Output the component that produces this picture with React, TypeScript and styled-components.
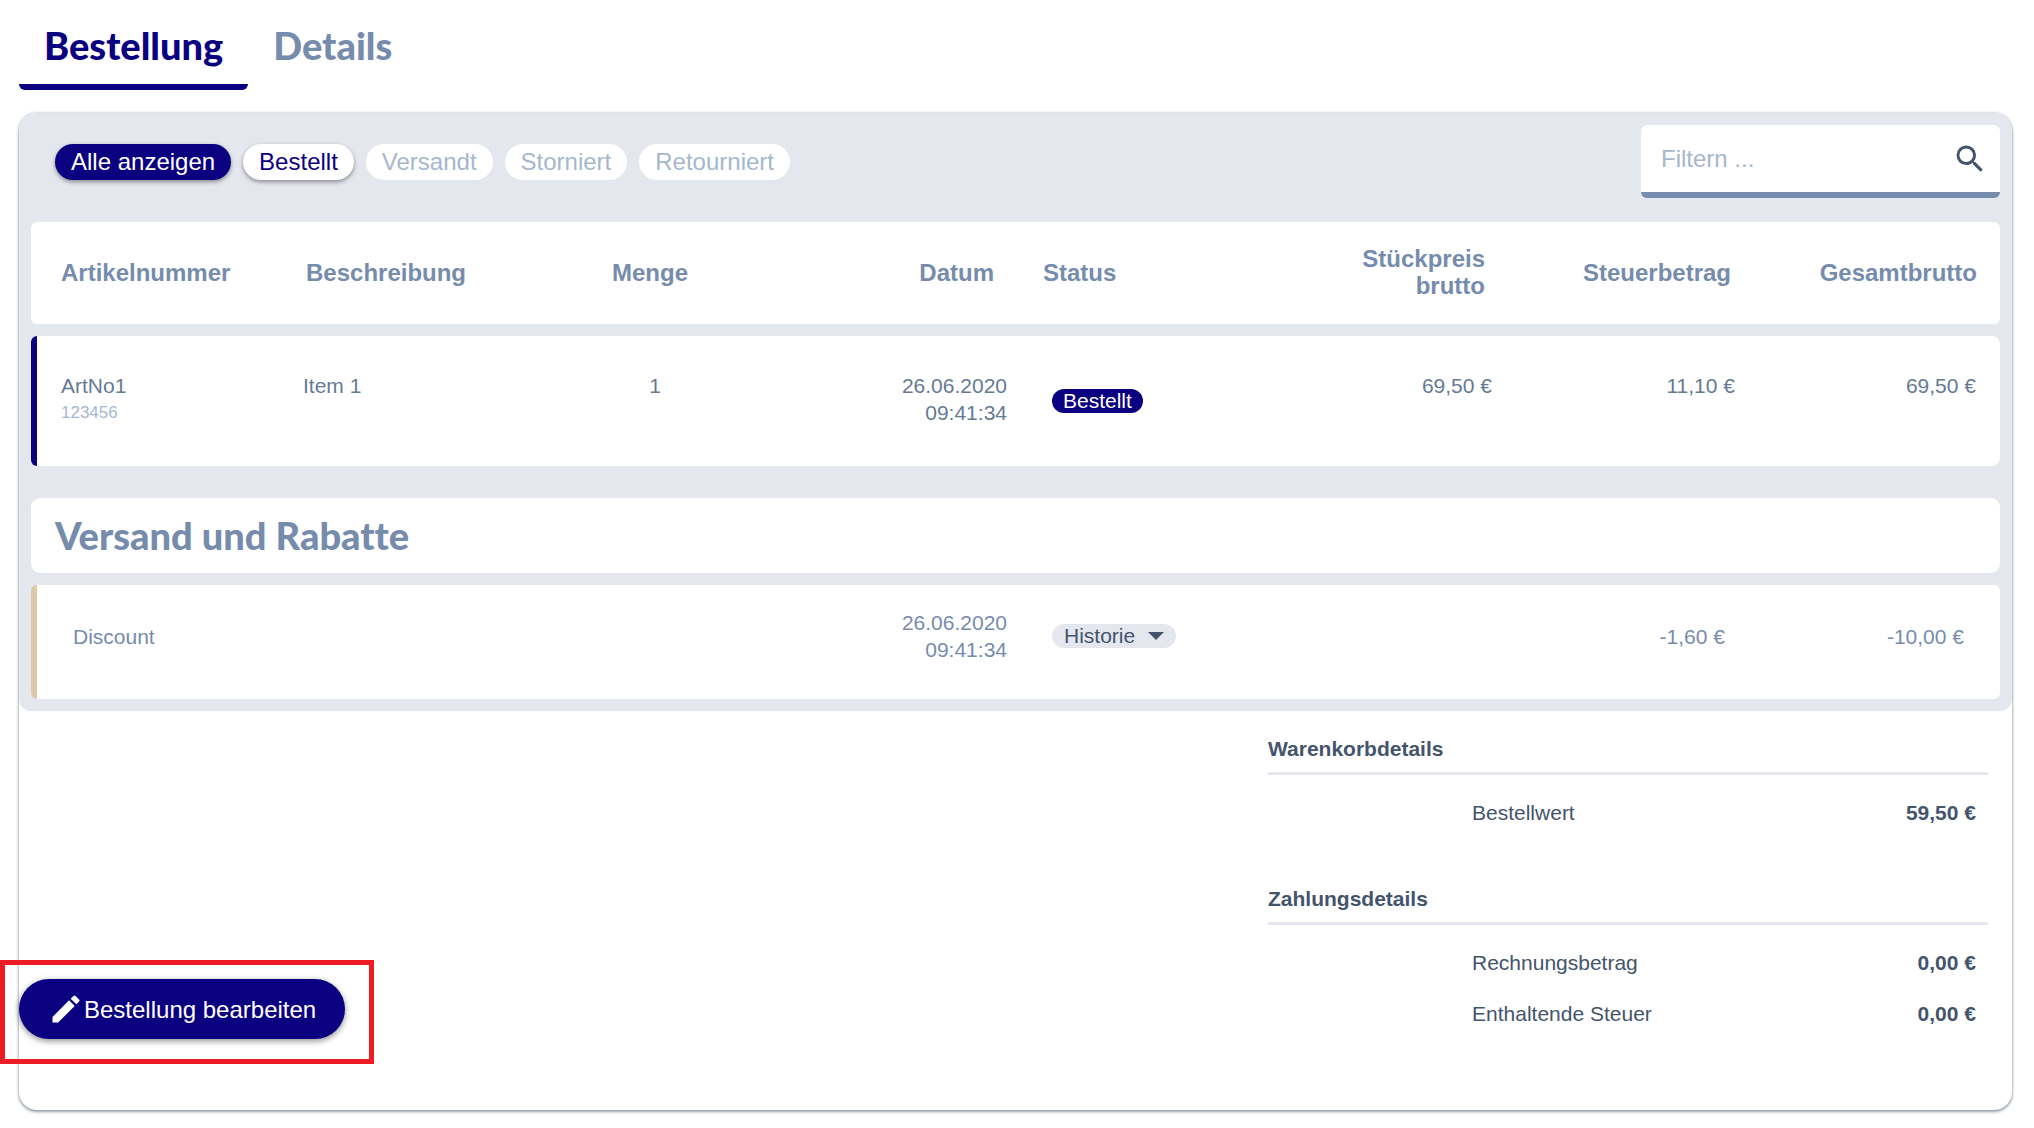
import React, { useState } from "react";
import styled, { createGlobalStyle, css } from "styled-components";

const color = {
  navy: "#0a0080",
  slate: "#768cac",
  slateLight: "#a6b7cd",
  text: "#667a93",
  dark: "#44546c",
  panel: "#e4e7ee",
  sand: "#dccaa6",
  marker: "#ed1c24",
};

const display = css`
  font-family: Lato, "Open Sans", sans-serif;
  font-size: 38px;
  font-weight: 900;
  line-height: 43px;
  font-variant-ligatures: none;
`;

const GlobalStyle = createGlobalStyle`
  *, *::before, *::after { box-sizing: border-box; }
  body {
    margin: 0;
    background: #fff;
    color: ${color.text};
    font: 21px/27px "Liberation Sans", Arial, sans-serif;
  }
  button, input, select { font: inherit; color: inherit; }
  button, select { cursor: pointer; }
`;

const Page = styled.div`
  padding: 0 22px 24px 19px;
`;

const Tabs = styled.nav`
  display: flex;
  margin-bottom: 23px;
`;

const Tab = styled.button<{ $active?: boolean }>`
  ${display}
  padding: 24px 25px 17px;
  border: 0;
  border-bottom: 6px solid ${(p) => (p.$active ? color.navy : "transparent")};
  border-radius: 0 0 6px 6px;
  background: none;
  color: ${(p) => (p.$active ? color.navy : color.slate)};
`;

const Card = styled.main`
  border-radius: 18px;
  background: #fff;
  box-shadow: 0 2px 3px rgba(68, 84, 108, 0.5), 0 0 3px rgba(68, 84, 108, 0.4);
`;

const Panel = styled.section`
  padding: 12px;
  border-radius: 18px 18px 12px 12px;
  background: ${color.panel};
`;

const Toolbar = styled.div`
  display: flex;
  align-items: center;
  justify-content: space-between;
  gap: 24px;
  margin-bottom: 24px;
  padding-left: 24px;
`;

const Filters = styled.div`
  display: flex;
  flex-wrap: wrap;
  gap: 12px;
`;

const Pill = styled.button<{ $active: boolean }>`
  height: 36px;
  padding: 0 16px;
  border: 0;
  border-radius: 18px;
  background: ${(p) => (p.$active ? color.navy : "#fff")};
  color: ${(p) => (p.$active ? "#fff" : color.navy)};
  font-size: 24px;
  line-height: 36px;
  box-shadow: 0 2px 4px rgba(0, 0, 0, 0.4);

  &:disabled {
    color: ${color.slateLight};
    box-shadow: none;
    cursor: default;
  }
`;

const Search = styled.label`
  display: flex;
  align-items: center;
  width: 359px;
  height: 73px;
  padding: 0 12px 0 20px;
  border-bottom: 6px solid ${color.slate};
  border-radius: 6px;
  background: #fff;
  color: ${color.dark};
`;

const SearchInput = styled.input`
  flex: 1;
  min-width: 0;
  padding: 0;
  border: 0;
  outline: 0;
  background: none;
  font-size: 24px;

  &::placeholder {
    color: ${color.slateLight};
    opacity: 1;
  }
`;

const Icon = styled.svg`
  flex: none;
  width: 36px;
  height: 36px;
  fill: currentColor;
`;

const Table = styled.table`
  display: block;

  thead,
  tbody {
    display: block;
  }
`;

const headColumns = "245fr 245fr 137fr 306fr 306fr 185fr 246fr 246fr";
const itemColumns = "242fr 237fr 121fr 346fr 298fr 187fr 243fr 241fr";
const discountColumns = "588fr 346fr 298fr 187fr 233fr 239fr";

const rowBase = css`
  display: grid;
  border-radius: 6px;
  background: #fff;
`;

const HeadRow = styled.tr`
  ${rowBase}
  grid-template-columns: ${headColumns};
  align-items: center;
  min-height: 102px;
  margin-bottom: 12px;
  padding: 23px 23px 25px 30px;
`;

const ItemRow = styled.tr`
  ${rowBase}
  grid-template-columns: ${itemColumns};
  min-height: 130px;
  padding: 36px 24px;
  border-left: 6px solid ${color.navy};
  border-radius: 6px 8px 8px 6px;
`;

const DiscountRow = styled.tr`
  ${rowBase}
  grid-template-columns: ${discountColumns};
  align-items: center;
  padding: 24px 36px;
  padding-bottom: 36px;
  border-left: 6px solid ${color.sand};
  color: ${color.slate};
`;

const HeadCell = styled.th<{ $right?: boolean; $status?: boolean }>`
  padding: 0 0 0 ${(p) => (p.$status ? 49 : 0)}px;
  color: ${color.slate};
  font-size: 24px;
  font-weight: bold;
  text-align: ${(p) => (p.$right ? "right" : "left")};
`;

const Cell = styled.td<{ $right?: boolean; $status?: boolean }>`
  display: flex;
  flex-direction: column;
  align-items: ${(p) => (p.$right ? "flex-end" : "flex-start")};
  align-self: ${(p) => (p.$status ? "center" : "auto")};
  padding: 0 0 0 ${(p) => (p.$status ? 45 : 0)}px;
`;

const SubText = styled.span`
  color: ${color.slateLight};
  font-size: 17px;
`;

const Badge = styled.span`
  height: 24px;
  padding: 0 11px;
  border-radius: 12px;
  background: ${color.navy};
  color: #fff;
  line-height: 24px;
`;

const HistoryBox = styled.span`
  position: relative;
  display: flex;
  color: ${color.dark};
`;

const HistorySelect = styled.select`
  height: 24px;
  padding: 0 40px 0 12px;
  border: 0;
  border-radius: 12px;
  background: ${color.panel};
  line-height: 24px;
  appearance: none;
`;

const Caret = styled.svg`
  position: absolute;
  top: 8px;
  right: 12px;
  width: 16px;
  height: 8px;
  fill: currentColor;
  pointer-events: none;
`;

const SectionTitle = styled.h2`
  ${display}
  margin: 32px 0 12px;
  padding: 16px 24px;
  border-radius: 9px;
  background: #fff;
  color: ${color.slate};
`;

const Footer = styled.div`
  display: flex;
  align-items: flex-end;
  justify-content: space-between;
  padding: 24px 24px 24px 0;
`;

const EditBox = styled.div`
  position: relative;
  margin-bottom: 47px;
`;

const EditButton = styled.button`
  display: flex;
  align-items: center;
  height: 60px;
  padding: 0 29px;
  border: 0;
  border-radius: 30px;
  background: ${color.navy};
  color: #fff;
  font-size: 24px;
  white-space: nowrap;
  box-shadow: 0 2px 6px rgba(0, 0, 0, 0.45);
`;

const Marker = styled.div`
  position: absolute;
  inset: -19px -29px -25px -19px;
  border: 5px solid ${color.marker};
  pointer-events: none;
`;

const Summary = styled.aside`
  flex: 0 1 720px;
  color: ${color.dark};
`;

const Group = styled.section`
  padding-bottom: 59px;
`;

const GroupTitle = styled.h3`
  margin: 0;
  padding-bottom: 10px;
  border-bottom: 3px solid ${color.panel};
  font-size: 21px;
  font-weight: bold;
`;

const Lines = styled.dl`
  margin: 0;
`;

const Line = styled.div`
  display: flex;
  justify-content: space-between;
  padding: 24px 12px 0 204px;

  dd {
    margin: 0;
    font-weight: bold;
  }
`;

const filters = [
  { label: "Alle anzeigen", count: 2 },
  { label: "Bestellt", count: 1 },
  { label: "Versandt", count: 0 },
  { label: "Storniert", count: 0 },
  { label: "Retourniert", count: 0 },
];

const groups = [
  { title: "Warenkorbdetails", lines: [["Bestellwert", "59,50 €"]] },
  {
    title: "Zahlungsdetails",
    lines: [
      ["Rechnungsbetrag", "0,00 €"],
      ["Enthaltende Steuer", "0,00 €"],
    ],
  },
];

export default function App() {
  const [filter, setFilter] = useState("Alle anzeigen");
  const [tab, setTab] = useState("Bestellung");

  return (
    <Page>
      <GlobalStyle />
      <Tabs>
        {["Bestellung", "Details"].map((name) => (
          <Tab key={name} type="button" $active={name === tab} onClick={() => setTab(name)}>
            {name}
          </Tab>
        ))}
      </Tabs>

      <Card>
        <Panel>
          <Toolbar>
            <Filters>
              {filters.map(({ label, count }) => (
                <Pill
                  key={label}
                  type="button"
                  disabled={count === 0}
                  $active={label === filter}
                  onClick={() => setFilter(label)}
                >
                  {label}
                </Pill>
              ))}
            </Filters>
            <Search>
              <SearchInput type="text" placeholder="Filtern ..." aria-label="Filtern" />
              <Icon viewBox="0 0 24 24" aria-hidden="true">
                <path d="M15.5 14h-.79l-.28-.27A6.47 6.47 0 0 0 16 9.5 6.5 6.5 0 1 0 9.5 16c1.61 0 3.09-.59 4.23-1.57l.27.28v.79l5 4.99L20.49 19l-4.99-5zm-6 0C7.01 14 5 11.99 5 9.5S7.01 5 9.5 5 14 7.01 14 9.5 11.99 14 9.5 14z" />
              </Icon>
            </Search>
          </Toolbar>

          <Table>
            <thead>
              <HeadRow>
                <HeadCell>Artikelnummer</HeadCell>
                <HeadCell>Beschreibung</HeadCell>
                <HeadCell $right>Menge</HeadCell>
                <HeadCell $right>Datum</HeadCell>
                <HeadCell $status>Status</HeadCell>
                <HeadCell $right>Stückpreis brutto</HeadCell>
                <HeadCell $right>Steuerbetrag</HeadCell>
                <HeadCell $right>Gesamtbrutto</HeadCell>
              </HeadRow>
            </thead>
            <tbody>
              <ItemRow>
                <Cell>
                  <span>ArtNo1</span>
                  <SubText>123456</SubText>
                </Cell>
                <Cell>Item 1</Cell>
                <Cell $right>1</Cell>
                <Cell $right>
                  <span>26.06.2020</span>
                  <span>09:41:34</span>
                </Cell>
                <Cell $status>
                  <Badge>Bestellt</Badge>
                </Cell>
                <Cell $right>69,50 €</Cell>
                <Cell $right>11,10 €</Cell>
                <Cell $right>69,50 €</Cell>
              </ItemRow>
            </tbody>
          </Table>

          <SectionTitle>Versand und Rabatte</SectionTitle>

          <Table>
            <tbody>
              <DiscountRow>
                <Cell>Discount</Cell>
                <Cell $right>
                  <span>26.06.2020</span>
                  <span>09:41:34</span>
                </Cell>
                <Cell $status>
                  <HistoryBox>
                    <HistorySelect aria-label="Historie">
                      <option>Historie</option>
                    </HistorySelect>
                    <Caret viewBox="0 0 16 8" aria-hidden="true">
                      <path d="M0 0h16L8 8z" />
                    </Caret>
                  </HistoryBox>
                </Cell>
                <Cell />
                <Cell $right>-1,60 €</Cell>
                <Cell $right>-10,00 €</Cell>
              </DiscountRow>
            </tbody>
          </Table>
        </Panel>

        <Footer>
          <EditBox>
            <EditButton type="button">
              <Icon viewBox="0 0 24 24" aria-hidden="true">
                <path d="M3 17.25V21h3.75L17.81 9.94l-3.75-3.75L3 17.25zM20.71 7.04a1 1 0 0 0 0-1.41l-2.34-2.34a1 1 0 0 0-1.41 0l-1.83 1.83 3.75 3.75 1.83-1.83z" />
              </Icon>
              Bestellung bearbeiten
            </EditButton>
            <Marker />
          </EditBox>

          <Summary>
            {groups.map(({ title, lines }) => (
              <Group key={title}>
                <GroupTitle>{title}</GroupTitle>
                <Lines>
                  {lines.map(([label, value]) => (
                    <Line key={label}>
                      <dt>{label}</dt>
                      <dd>{value}</dd>
                    </Line>
                  ))}
                </Lines>
              </Group>
            ))}
          </Summary>
        </Footer>
      </Card>
    </Page>
  );
}
